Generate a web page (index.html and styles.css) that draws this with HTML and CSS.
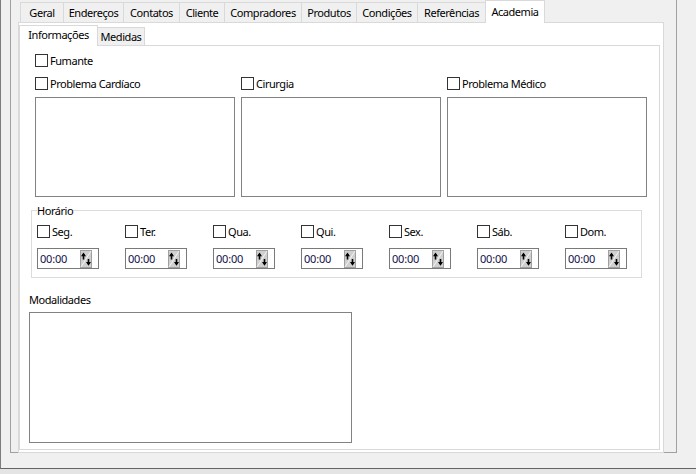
FILE: index.html
```html
<!DOCTYPE html>
<html lang="pt-BR">
<head>
<meta charset="utf-8">
<title>Academia</title>
<link rel="stylesheet" href="styles.css">
</head>
<body>
<div class="window">
  <div class="bevel">
    <div class="pc">
      <div class="tabs">
        <div class="tab t-geral">Geral</div>
        <div class="tab t-end">Endereços</div>
        <div class="tab t-cont">Contatos</div>
        <div class="tab t-cli">Cliente</div>
        <div class="tab t-comp">Compradores</div>
        <div class="tab t-prod">Produtos</div>
        <div class="tab t-cond">Condições</div>
        <div class="tab t-ref">Referências</div>
        <div class="tab active t-acad">Academia</div>
      </div>
      <div class="sheet">
        <div class="pc-inner">
          <div class="itabs">
            <div class="itab active t-info">Informações</div>
            <div class="itab t-med">Medidas</div>
          </div>
          <div class="isheet">
            <label class="chk fumante"><span class="box"></span><span>Fumante</span></label>
            <div class="cols">
              <div class="col">
                <label class="chk"><span class="box"></span><span>Problema Cardíaco</span></label>
                <div class="memo"></div>
              </div>
              <div class="col">
                <label class="chk"><span class="box"></span><span>Cirurgia</span></label>
                <div class="memo"></div>
              </div>
              <div class="col">
                <label class="chk"><span class="box"></span><span>Problema Médico</span></label>
                <div class="memo"></div>
              </div>
            </div>
            <fieldset class="horario">
              <legend>Horário</legend>
              <div class="days">
                <div class="day">
                  <label class="chk"><span class="box"></span><span>Seg.</span></label>
                  <div class="time"><span class="tval">00:00</span><svg class="spin" viewBox="0 0 12 18" width="12" height="18"><rect x="0.5" y="0.5" width="11" height="17" fill="#cfcfcf" stroke="#a0a0a0"/><path d="M1 17 L11 1" stroke="#f4f4f4" stroke-width="1"/><path d="M3.5 9.5V4" stroke="#000" stroke-width="1.6"/><path d="M1 6.2 L3.5 2.5 L6 6.2Z" fill="#000"/><path d="M8.5 9V14" stroke="#000" stroke-width="1.6"/><path d="M6 12 L8.5 15.7 L11 12Z" fill="#000"/></svg></div>
                </div>
                <div class="day">
                  <label class="chk"><span class="box"></span><span>Ter.</span></label>
                  <div class="time"><span class="tval">00:00</span><svg class="spin" viewBox="0 0 12 18" width="12" height="18"><rect x="0.5" y="0.5" width="11" height="17" fill="#cfcfcf" stroke="#a0a0a0"/><path d="M1 17 L11 1" stroke="#f4f4f4" stroke-width="1"/><path d="M3.5 9.5V4" stroke="#000" stroke-width="1.6"/><path d="M1 6.2 L3.5 2.5 L6 6.2Z" fill="#000"/><path d="M8.5 9V14" stroke="#000" stroke-width="1.6"/><path d="M6 12 L8.5 15.7 L11 12Z" fill="#000"/></svg></div>
                </div>
                <div class="day">
                  <label class="chk"><span class="box"></span><span>Qua.</span></label>
                  <div class="time"><span class="tval">00:00</span><svg class="spin" viewBox="0 0 12 18" width="12" height="18"><rect x="0.5" y="0.5" width="11" height="17" fill="#cfcfcf" stroke="#a0a0a0"/><path d="M1 17 L11 1" stroke="#f4f4f4" stroke-width="1"/><path d="M3.5 9.5V4" stroke="#000" stroke-width="1.6"/><path d="M1 6.2 L3.5 2.5 L6 6.2Z" fill="#000"/><path d="M8.5 9V14" stroke="#000" stroke-width="1.6"/><path d="M6 12 L8.5 15.7 L11 12Z" fill="#000"/></svg></div>
                </div>
                <div class="day">
                  <label class="chk"><span class="box"></span><span>Qui.</span></label>
                  <div class="time"><span class="tval">00:00</span><svg class="spin" viewBox="0 0 12 18" width="12" height="18"><rect x="0.5" y="0.5" width="11" height="17" fill="#cfcfcf" stroke="#a0a0a0"/><path d="M1 17 L11 1" stroke="#f4f4f4" stroke-width="1"/><path d="M3.5 9.5V4" stroke="#000" stroke-width="1.6"/><path d="M1 6.2 L3.5 2.5 L6 6.2Z" fill="#000"/><path d="M8.5 9V14" stroke="#000" stroke-width="1.6"/><path d="M6 12 L8.5 15.7 L11 12Z" fill="#000"/></svg></div>
                </div>
                <div class="day">
                  <label class="chk"><span class="box"></span><span>Sex.</span></label>
                  <div class="time"><span class="tval">00:00</span><svg class="spin" viewBox="0 0 12 18" width="12" height="18"><rect x="0.5" y="0.5" width="11" height="17" fill="#cfcfcf" stroke="#a0a0a0"/><path d="M1 17 L11 1" stroke="#f4f4f4" stroke-width="1"/><path d="M3.5 9.5V4" stroke="#000" stroke-width="1.6"/><path d="M1 6.2 L3.5 2.5 L6 6.2Z" fill="#000"/><path d="M8.5 9V14" stroke="#000" stroke-width="1.6"/><path d="M6 12 L8.5 15.7 L11 12Z" fill="#000"/></svg></div>
                </div>
                <div class="day">
                  <label class="chk"><span class="box"></span><span>Sáb.</span></label>
                  <div class="time"><span class="tval">00:00</span><svg class="spin" viewBox="0 0 12 18" width="12" height="18"><rect x="0.5" y="0.5" width="11" height="17" fill="#cfcfcf" stroke="#a0a0a0"/><path d="M1 17 L11 1" stroke="#f4f4f4" stroke-width="1"/><path d="M3.5 9.5V4" stroke="#000" stroke-width="1.6"/><path d="M1 6.2 L3.5 2.5 L6 6.2Z" fill="#000"/><path d="M8.5 9V14" stroke="#000" stroke-width="1.6"/><path d="M6 12 L8.5 15.7 L11 12Z" fill="#000"/></svg></div>
                </div>
                <div class="day">
                  <label class="chk"><span class="box"></span><span>Dom.</span></label>
                  <div class="time"><span class="tval">00:00</span><svg class="spin" viewBox="0 0 12 18" width="12" height="18"><rect x="0.5" y="0.5" width="11" height="17" fill="#cfcfcf" stroke="#a0a0a0"/><path d="M1 17 L11 1" stroke="#f4f4f4" stroke-width="1"/><path d="M3.5 9.5V4" stroke="#000" stroke-width="1.6"/><path d="M1 6.2 L3.5 2.5 L6 6.2Z" fill="#000"/><path d="M8.5 9V14" stroke="#000" stroke-width="1.6"/><path d="M6 12 L8.5 15.7 L11 12Z" fill="#000"/></svg></div>
                </div>
              </div>
            </fieldset>
            <div class="mod-label">Modalidades</div>
            <div class="memo mod"></div>
          </div>
        </div>
      </div>
    </div>
  </div>
</div>
</body>
</html>
```

FILE: styles.css
```css
* { box-sizing: border-box; }
html, body { margin: 0; padding: 0; }
body {
  width: 696px;
  height: 474px;
  overflow: hidden;
  background: #e4e4e4;
  font-family: "Noto Sans", sans-serif;
  font-size: 11px;
  letter-spacing: -0.45px;
  color: #000;
}
.window {
  height: 469px;
  background: #f0f0f0;
  border-left: 1px solid #7d7d7d;
  border-bottom: 1px solid #646464;
  padding-left: 9px;
}
.bevel {
  width: 667px;
  height: 453px;
  border-left: 1px solid #a0a0a0;
  border-right: 1px solid #a0a0a0;
  border-bottom: 1px solid #a0a0a0;
  padding-left: 7px;
}
.pc {
  width: 646px;
  position: relative;
  z-index: 1;
}
.tabs {
  display: flex;
  align-items: flex-end;
  height: 22px;
  padding-left: 2px;
}
.tab {
  height: 20px;
  border: 1px solid #d9d9d9;
  border-bottom: none;
  border-right: none;
  background: #f0f0f0;
  display: flex;
  align-items: center;
  justify-content: center;
  white-space: nowrap;
}
.tab.active {
  height: 23px;
  margin-bottom: -1px;
  background: #fff;
  border-right: 1px solid #d9d9d9;
  padding-bottom: 2px;
  position: relative;
  z-index: 2;
}
.t-geral { width: 43px; }
.t-end { width: 60px; }
.t-cont { width: 56px; }
.t-cli { width: 45px; }
.t-comp { width: 77px; }
.t-prod { width: 55px; }
.t-cond { width: 61px; }
.t-ref { width: 68px; }
.t-acad { width: 60px; }

.sheet {
  height: 431px;
  border: 1px solid #d9d9d9;
  background: #fff;
  padding: 2px 3px 2px 0;
}
.itabs {
  display: flex;
  align-items: flex-end;
  height: 20px;
}
.itab {
  height: 18px;
  border: 1px solid #d9d9d9;
  border-bottom: none;
  background: #f0f0f0;
  display: flex;
  align-items: center;
  justify-content: center;
  white-space: nowrap;
}
.itab.active {
  height: 21px;
  margin-bottom: -1px;
  background: #fff;
  padding-bottom: 3px;
  position: relative;
  z-index: 2;
}
.t-info { width: 79px; }
.t-med { width: 47px; border-left: none; }

.isheet {
  height: 405px;
  border: 1px solid #d9d9d9;
  background: #fff;
}
.chk {
  display: flex;
  align-items: center;
  gap: 2px;
  height: 13px;
  white-space: nowrap;
}
.box {
  flex: none;
  width: 13px;
  height: 13px;
  border: 1px solid #333;
  background: #fff;
}
.fumante { margin: 8px 0 0 15px; width: max-content; }
.cols {
  display: flex;
  gap: 6px;
  margin: 10px 0 0 15px;
}
.col {
  width: 200px;
  display: flex;
  flex-direction: column;
  gap: 7px;
}
.memo {
  height: 100px;
  border: 1px solid #828282;
  background: #fff;
}
.horario {
  margin: 7px 0 0 11px;
  width: 611px;
  border: 1px solid #dcdcdc;
  padding: 8px 5px 8px;
  min-width: 0;
}
.horario legend {
  padding: 0;
  line-height: 13px;
}
.days {
  display: grid;
  grid-template-columns: repeat(7, 62px);
  column-gap: 26px;
}
.day {
  display: flex;
  flex-direction: column;
  gap: 10px;
}
.time {
  width: 62px;
  height: 21px;
  border: 1px solid #7a7a7a;
  display: flex;
  align-items: center;
  padding-left: 2px;
}
.tval { color: #10104a; letter-spacing: -0.2px; }
.spin {
  display: block;
  margin-left: auto;
  margin-right: 6px;
  flex: none;
}
.mod-label {
  margin: 15px 0 0 9px;
  line-height: 14px;
}
.memo.mod {
  width: 323px;
  height: 131px;
  margin: 5px 0 0 9px;
}
```
